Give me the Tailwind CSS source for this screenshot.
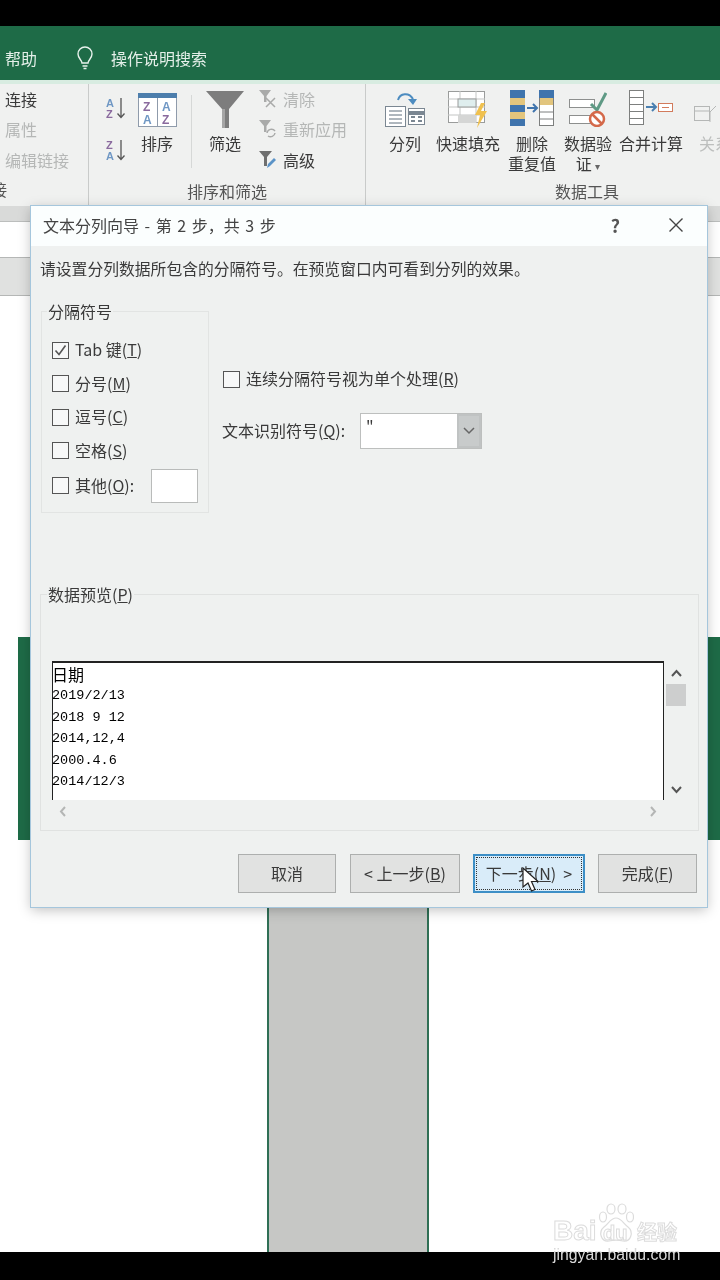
<!DOCTYPE html>
<html lang="zh-CN">
  <head>
    <meta charset="UTF-8" />
    <title>文本分列向导</title>
    <script src="https://cdn.jsdelivr.net/npm/@tailwindcss/browser@4"></script>
  </head>
  <body class="bg-black">
    <div class="relative w-[720px] h-[1280px] overflow-hidden flex flex-col bg-white text-[16px] text-[#3a3a3a] font-['Noto_Sans_CJK_SC','Noto_Sans',sans-serif] blur-[0.4px]">
      <div class="h-[26px] bg-black shrink-0"></div>

      <!-- title tabs -->
      <div class="h-[54px] shrink-0 bg-[#1e6b47] flex items-center text-[#e4efe9] pl-[5px] pt-[9px]">
        <span>帮助</span>
        <svg class="ml-[39px] w-[18px] h-[24px]" viewBox="0 0 18 24" fill="none" stroke="#e8f2ed" stroke-width="1.4">
          <path d="M6 17c0-3-4-4.500-4-9a7 7 0 0 1 14 0c0 4.500-4 6-4 9z" />
          <path d="M6.500 20h5M7.500 22.500h3" />
        </svg>
        <span class="ml-[17px]">操作说明搜索</span>
      </div>

      <!-- ribbon -->
      <div class="h-[126px] shrink-0 bg-[#f0f1f0] border-t-[4px] border-[#d8ece1] flex overflow-hidden">
        <div class="w-[89px] shrink-0 border-r border-[#c9cbca] relative flex flex-col pl-[5px]">
          <div class="h-[31px] -mt-[1px] flex items-center">连接</div>
          <div class="h-[30px] flex items-center text-[#b5b7b6]">属性</div>
          <div class="h-[31px] flex items-center text-[#b5b7b6] whitespace-nowrap">编辑链接</div>
          <div class="mt-[4px] h-[20px] leading-[20px] -ml-[14px] text-[#555]">接</div>
        </div>

        <div class="w-[277px] shrink-0 border-r border-[#c9cbca] flex flex-col">
          <div class="h-[96px] flex">
            <div class="ml-[17px] pt-[12px] flex flex-col gap-[18px]">
              <svg class="w-[20px] h-[24px]" viewBox="0 0 20 24">
                <text x="0" y="11" font-size="11" font-weight="700" fill="#6f97c4" font-family="Liberation Sans">A</text>
                <text x="0" y="22" font-size="11" font-weight="700" fill="#8a6a9e" font-family="Liberation Sans">Z</text>
                <path d="M15 2v19M11.500 17.500 15 21.500l3.500-4" fill="none" stroke="#555" stroke-width="1.300" />
              </svg>
              <svg class="w-[20px] h-[24px]" viewBox="0 0 20 24">
                <text x="0" y="11" font-size="11" font-weight="700" fill="#8a6a9e" font-family="Liberation Sans">Z</text>
                <text x="0" y="22" font-size="11" font-weight="700" fill="#6f97c4" font-family="Liberation Sans">A</text>
                <path d="M15 2v19M11.500 17.500 15 21.500l3.500-4" fill="none" stroke="#555" stroke-width="1.300" />
              </svg>
            </div>
            <div class="ml-[11px] w-[40px] flex flex-col items-center pt-[9px]">
              <svg class="w-[39px] h-[34px]" viewBox="0 0 39 34">
                <rect x="0.500" y="0.500" width="38" height="33" fill="#fff" stroke="#8f9bab" />
                <rect x="0" y="0" width="39" height="5" fill="#4d7eac" />
                <path d="M19.500 5v28" stroke="#8f9bab" />
                <text x="5" y="18" font-size="12" font-weight="700" fill="#8a6a9e" font-family="Liberation Sans">Z</text>
                <text x="5" y="31" font-size="12" font-weight="700" fill="#6f97c4" font-family="Liberation Sans">A</text>
                <text x="24" y="18" font-size="12" font-weight="700" fill="#6f97c4" font-family="Liberation Sans">A</text>
                <text x="24" y="31" font-size="12" font-weight="700" fill="#8a6a9e" font-family="Liberation Sans">Z</text>
              </svg>
              <span class="mt-[4px] leading-[24px]">排序</span>
            </div>
            <div class="ml-[14px] mt-[11px] w-px h-[73px] bg-[#d6d8d7]"></div>
            <div class="ml-[14px] w-[38px] flex flex-col items-center pt-[7px]">
              <svg class="w-[38px] h-[37px]" viewBox="0 0 38 37">
                <path d="M0 0h38L23 18v19h-7V18z" fill="#7d7d7d" />
                <path d="M16 18h3v19h-3z" fill="#a5a5a5" />
              </svg>
              <span class="mt-[3px] leading-[24px]">筛选</span>
            </div>
            <div class="ml-[15px] -mt-[1px] flex flex-col">
              <div class="h-[31px] flex items-center text-[#b5b7b6]">
                <svg class="w-[18px] h-[20px] mr-[6px]" viewBox="0 0 18 20">
                  <path d="M0 1h12L7.500 7v6H5V7z" fill="#a9aaa9" />
                  <path d="M7 9l9 9M16 9l-9 9" stroke="#a9aaa9" stroke-width="1.500" />
                </svg>
                清除
              </div>
              <div class="h-[30px] flex items-center text-[#b5b7b6] whitespace-nowrap">
                <svg class="w-[18px] h-[20px] mr-[6px]" viewBox="0 0 18 20">
                  <path d="M0 1h12L7.500 7v6H5V7z" fill="#a9aaa9" />
                  <path d="M8 14a4.500 4.500 0 0 1 8-2M16 14a4.500 4.500 0 0 1-7 3" fill="none" stroke="#a9aaa9" stroke-width="1.500" />
                </svg>
                重新应用
              </div>
              <div class="h-[31px] flex items-center">
                <svg class="w-[18px] h-[20px] mr-[6px]" viewBox="0 0 18 20">
                  <path d="M0 1h13L8 7v9H5V7z" fill="#6f6f6f" />
                  <path d="M8 18l1-4 6-6 2 2-6 6z" fill="#5b93c7" />
                </svg>
                高级
              </div>
            </div>
          </div>
          <div class="mt-[1px] text-center leading-[20px] text-[#555]">排序和筛选</div>
        </div>

        <div class="flex-1 min-w-0 flex flex-col">
          <div class="h-[96px] flex pl-[9px] leading-[20px] text-center">
            <div class="w-[60px] shrink-0 flex flex-col items-center pt-[7px]">
              <svg class="w-[40px] h-[36px]" viewBox="0 0 40 36">
                <path d="M13 9C15 2 24 1 28 8" fill="none" stroke="#4d8cc0" stroke-width="2" />
                <path d="M23 8h9l-4 6z" fill="#4d8cc0" />
                <rect x="0.500" y="15.500" width="20" height="20" fill="#fff" stroke="#7b8792" />
                <path d="M4 20h13M4 24h13M4 28h13M4 32h13" stroke="#5f6f7d" />
                <rect x="23.500" y="17.500" width="16" height="16" fill="#fff" stroke="#7b8792" />
                <path d="M23 22h17" stroke="#7b8792" stroke-width="4" />
                <path d="M26 26h4M33 26h4M26 30h4M33 30h4" stroke="#7b8792" stroke-width="2" />
              </svg>
              <span class="mt-[6px]">分列</span>
            </div>
            <div class="w-[64px] shrink-0 ml-px flex flex-col items-center pt-[7px] whitespace-nowrap">
              <svg class="w-[41px] h-[37px]" viewBox="0 0 41 37">
                <rect x="0.500" y="0.500" width="36" height="31" fill="#fff" stroke="#9a9c9b" />
                <path d="M0 8h37M0 16h37M0 24h37M12 0v32M28 0v32" stroke="#c3c5c4" />
                <rect x="10" y="8" width="18" height="8" fill="#dfeeee" stroke="#9a9c9b" />
                <rect x="10" y="24" width="18" height="8" fill="#d5d6d5" />
                <path d="M33 12l-6 12h5l-3 13 10-17h-6l4-8z" fill="#f0c14f" />
              </svg>
              <span class="mt-[5px]">快速填充</span>
            </div>
            <div class="w-[64px] shrink-0 flex flex-col items-center pt-[6px] leading-[20px]">
              <svg class="w-[44px] h-[36px]" viewBox="0 0 44 36">
                <rect x="0" y="0" width="15" height="36" fill="#3f74ad" />
                <rect x="0" y="8" width="15" height="7" fill="#e2c57d" />
                <rect x="0" y="22" width="15" height="7" fill="#e2c57d" />
                <rect x="29.500" y="0.500" width="14" height="35" fill="#fff" stroke="#7d7f7e" />
                <rect x="29" y="0" width="15" height="8" fill="#3f74ad" />
                <rect x="30" y="8" width="13" height="7" fill="#e2c57d" />
                <path d="M29 22h15M29 29h15" stroke="#7d7f7e" />
                <path d="M17 18h9M23 14l4 4-4 4" fill="none" stroke="#3f74ad" stroke-width="2" />
              </svg>
              <span class="mt-[7px]">删除</span>
              <span class="whitespace-nowrap">重复值</span>
            </div>
            <div class="w-[48px] shrink-0 flex flex-col items-center pt-[7px] leading-[20px] whitespace-nowrap">
              <svg class="w-[38px] h-[36px]" viewBox="0 0 38 36">
                <rect x="0.500" y="8.500" width="25" height="8" fill="#fff" stroke="#8d8f8e" />
                <rect x="0.500" y="24.500" width="25" height="8" fill="#fff" stroke="#8d8f8e" />
                <path d="M22 13l6 6L37 2" fill="none" stroke="#5f9a85" stroke-width="3" />
                <circle cx="28" cy="28" r="7" fill="#fff" stroke="#d4694a" stroke-width="2.500" />
                <path d="M23 23l10 10" stroke="#d4694a" stroke-width="2.500" />
              </svg>
              <span class="mt-[6px]">数据验</span>
              <span>证 <span class="text-[10px] text-[#666]">▾</span></span>
            </div>
            <div class="w-[64px] shrink-0 ml-[7px] flex flex-col items-center pt-[6px] whitespace-nowrap">
              <svg class="w-[44px] h-[36px]" viewBox="0 0 44 36">
                <rect x="0.500" y="0.500" width="14" height="34" fill="#fff" stroke="#7d7f7e" />
                <path d="M0 7.500h15M0 14.500h15M0 21.500h15M0 28.500h15" stroke="#7d7f7e" />
                <path d="M17 17h9M23 13l4 4-4 4" fill="none" stroke="#4a7fb0" stroke-width="2" />
                <rect x="29.500" y="13.500" width="14" height="8" fill="#fff" stroke="#d27b5c" />
                <path d="M33 17.500h7" stroke="#d27b5c" />
              </svg>
              <span class="mt-[7px]">合并计算</span>
            </div>
            <div class="ml-[11px] shrink-0 flex flex-col pt-[20px] text-[#bdbfbe] whitespace-nowrap">
              <svg class="w-[24px] h-[20px]" viewBox="0 0 24 20">
                <rect x="0.500" y="2.500" width="15" height="14" fill="none" stroke="#b5b7b6" />
                <path d="M0 7h16" stroke="#b5b7b6" />
                <path d="M16 8l6-6M16 8v10" stroke="#b5b7b6" fill="none" />
              </svg>
              <span class="mt-[9px] ml-[5px]">关系</span>
            </div>
          </div>
          <div class="mt-[1px] leading-[20px] text-[#555] pl-[189px]">数据工具</div>
        </div>
      </div>

      <!-- formula and header bands -->
      <div class="h-[16px] shrink-0 bg-[#d9dad9] border-b border-[#bcbebd]"></div>
      <div class="h-[35px] shrink-0 bg-white"></div>
      <div class="h-[39px] shrink-0 bg-[#e0e1e0] border-t border-[#b5b7b6] border-b"></div>

      <!-- sheet -->
      <div class="h-[341px] shrink-0 bg-white"></div>
      <div class="h-[203px] shrink-0 ml-[18px] bg-[#1e6b47]"></div>
      <div class="flex-1 min-h-0 ml-[267px] w-[162px] bg-[#c6c7c5] border-x-[2px] border-[#2f6f55]"></div>
      <div class="h-[28px] shrink-0 bg-black"></div>

      <!-- dialog -->
      <div class="absolute left-[31px] top-[206px] w-[676px] h-[701px] bg-[#eff1f0] shadow-[0_0_0_1px_#a5c6dc,0_3px_12px_rgba(0,0,0,0.25)] flex flex-col">
        <div class="h-[40px] shrink-0 bg-[#fbfefe] flex items-center pl-[12px] pb-[2px] text-[16px]">
          <span class="flex-1 text-[#444] [word-spacing:2px]">文本分列向导 - 第 2 步，共 3 步</span>
          <span class="mr-[49px] text-[18px] font-bold text-[#555]">?</span>
          <svg class="mr-[24px] w-[14px] h-[14px]" viewBox="0 0 14 14" stroke="#444" stroke-width="1.400">
            <path d="M0.500 0.500l13 13M13.500 0.500l-13 13" />
          </svg>
        </div>
        <div class="flex-1 flex flex-col pl-[9px] pr-[10px]">
          <div class="mt-[13px] leading-[20px] text-[15.800px] whitespace-nowrap">请设置分列数据所包含的分隔符号。在预览窗口内可看到分列的效果。</div>

          <div class="mt-[22px] h-[212px] flex">
            <fieldset class="ml-px w-[168px] h-full border border-[#e2e4e3] pl-[10px] pt-[16px]">
              <legend class="-ml-[5px] px-px leading-[20px]">分隔符号</legend>
              <div class="flex flex-col gap-[9.500px]">
                <label class="h-[24px] flex items-center gap-[6px]">
                  <span class="w-[17px] h-[17px] mt-[2px] border-[1.500px] border-[#555] bg-[#f7f8f8] flex items-center justify-center">
                    <svg class="w-[13px] h-[13px]" viewBox="0 0 13 13" fill="none" stroke="#555" stroke-width="1.600"><path d="M1.500 6.500l3.500 4 6.500-9" /></svg>
                  </span>
                  <span>Tab 键(<span class="underline">T</span>)</span>
                </label>
                <label class="h-[24px] flex items-center gap-[6px]">
                  <span class="w-[17px] h-[17px] mt-[2px] border-[1.500px] border-[#555] bg-[#f7f8f8]"></span>
                  <span>分号(<span class="underline">M</span>)</span>
                </label>
                <label class="h-[24px] flex items-center gap-[6px]">
                  <span class="w-[17px] h-[17px] mt-[2px] border-[1.500px] border-[#555] bg-[#f7f8f8]"></span>
                  <span>逗号(<span class="underline">C</span>)</span>
                </label>
                <label class="h-[24px] flex items-center gap-[6px]">
                  <span class="w-[17px] h-[17px] mt-[2px] border-[1.500px] border-[#555] bg-[#f7f8f8]"></span>
                  <span>空格(<span class="underline">S</span>)</span>
                </label>
                <label class="h-[35px] -mt-[4px] flex items-center gap-[6px]">
                  <span class="w-[17px] h-[17px] mt-[2px] border-[1.500px] border-[#555] bg-[#f7f8f8]"></span>
                  <span>其他(<span class="underline">O</span>):</span>
                  <span class="ml-[11px] mt-[2px] w-[47px] h-[34px] bg-white border border-[#b9bbba]"></span>
                </label>
              </div>
            </fieldset>

            <div class="ml-[13px] pt-[65px] flex flex-col">
              <label class="h-[24px] ml-px flex items-center gap-[6px]">
                <span class="w-[17px] h-[17px] mt-[2px] border-[1.500px] border-[#555] bg-[#f7f8f8]"></span>
                <span>连续分隔符号视为单个处理(<span class="underline">R</span>)</span>
              </label>
              <div class="mt-[23px] flex items-center">
                <span class="w-[138px] pb-[2px] whitespace-nowrap">文本识别符号(<span class="underline">Q</span>):</span>
                <div class="w-[122px] h-[36px] bg-white border border-[#bdbfbe] flex">
                  <span class="flex-1 pl-[5px] leading-[26px]">"</span>
                  <span class="w-[24px] bg-[#c8cbcb] border-2 border-[#c0c3c3] flex items-center justify-center">
                    <svg class="w-[12px] h-[8px]" viewBox="0 0 12 8" fill="none" stroke="#666" stroke-width="1.500"><path d="M1 1l5 5 5-5" /></svg>
                  </span>
                </div>
              </div>
            </div>
          </div>

          <fieldset class="mt-[71px] h-[247px] border border-[#e0e2e1] px-[11px] pt-[57px]">
            <legend class="-ml-[5px] px-px leading-[20px]">数据预览(<span class="underline">P</span>)</legend>
            <div class="flex h-[139px]">
              <div class="w-[612px] bg-white border-t-2 border-x border-[#222] text-black">
                <div class="h-[22px] leading-[23px] -ml-px">日期</div>
                <div class="font-['Liberation_Mono',monospace] text-[13.500px] leading-[21.500px] -ml-px">
                  <div>2019/2/13</div>
                  <div>2018 9 12</div>
                  <div>2014,12,4</div>
                  <div>2000.4.6</div>
                  <div>2014/12/3</div>
                </div>
              </div>
              <div class="w-[22px] ml-px flex flex-col items-center pt-[8px] pb-[6px]">
                <svg class="w-[11px] h-[8px]" viewBox="0 0 11 8" fill="none" stroke="#555" stroke-width="2"><path d="M1 7l4.500-5L10 7" /></svg>
                <div class="mt-[7px] w-[20px] h-[22px] bg-[#cdcece]"></div>
                <svg class="mt-auto w-[11px] h-[8px]" viewBox="0 0 11 8" fill="none" stroke="#555" stroke-width="2"><path d="M1 1l4.500 5L10 1" /></svg>
              </div>
            </div>
            <div class="w-[612px] h-[22px] flex items-center justify-between px-[7px]">
              <svg class="w-[7px] h-[11px]" viewBox="0 0 7 11" fill="none" stroke="#b4b6b5" stroke-width="2"><path d="M6 1L2 5.500 6 10" /></svg>
              <svg class="w-[7px] h-[11px]" viewBox="0 0 7 11" fill="none" stroke="#b4b6b5" stroke-width="2"><path d="M1 1l4 4.500L1 10" /></svg>
            </div>
          </fieldset>

          <div class="mt-[23px] flex justify-end text-[16px]">
            <button class="w-[98px] h-[39px] pb-[2px] bg-[#e1e2e1] border border-[#adafae]">取消</button>
            <button class="ml-[14px] w-[110px] h-[39px] pb-[2px] bg-[#e1e2e1] border border-[#adafae]">&lt; 上一步(<span class="underline">B</span>)</button>
            <button class="ml-[13px] w-[112px] h-[39px] bg-[#d9ecf9] border-2 border-[#3d8fc6] p-px">
              <span class="flex items-center justify-center h-full pb-[2px] border border-dotted border-[#333] whitespace-nowrap">下一步(<span class="underline">N</span>) &nbsp;&gt;</span>
            </button>
            <button class="ml-[13px] w-[99px] h-[39px] pb-[2px] bg-[#e1e2e1] border border-[#adafae]">完成(<span class="underline">F</span>)</button>
          </div>
        </div>
      </div>

      <!-- mouse pointer -->
      <svg class="absolute left-[522px] top-[867px] w-[17px] h-[26px]" viewBox="0 0 17 26">
        <path d="M1 1v19l5-4 3.500 8 3.500-1.500-3.500-8H16z" fill="#fff" stroke="#222" stroke-width="1.200" />
      </svg>

      <!-- watermark -->
      <div class="absolute left-[553px] top-[1217px] flex items-baseline text-transparent [-webkit-text-stroke:1px_#dcdcdc] font-['Liberation_Sans',sans-serif] font-bold whitespace-nowrap">
        <span class="w-[50px] text-[28px] leading-[28px]">Bai</span>
        <span class="w-[34px] text-[20px] leading-[28px]">du</span>
        <span class="text-[20px] leading-[28px] font-['Noto_Sans_CJK_SC',sans-serif]">经验</span>
        <svg class="absolute left-[45px] -top-[14px] w-[36px] h-[40px]" viewBox="0 0 36 40" fill="none" stroke="#dcdcdc" stroke-width="1.200">
          <ellipse cx="5" cy="14" rx="3.500" ry="5" />
          <ellipse cx="13" cy="6" rx="4" ry="5" />
          <ellipse cx="24" cy="6" rx="4" ry="5" />
          <ellipse cx="32" cy="14" rx="3.500" ry="5" />
          <path d="M18 15c5 0 7 5 12 9 6 5 3 15-5 14-4-1-10-1-14 0-8 1-11-9-5-14 5-4 7-9 12-9z" />
        </svg>
      </div>
      <div class="absolute left-[553px] top-[1245px] leading-[20px] text-[15.800px] text-[#d8d8d8] font-['Liberation_Sans',sans-serif]">jingyan.baidu.com</div>
    </div>
  </body>
</html>
